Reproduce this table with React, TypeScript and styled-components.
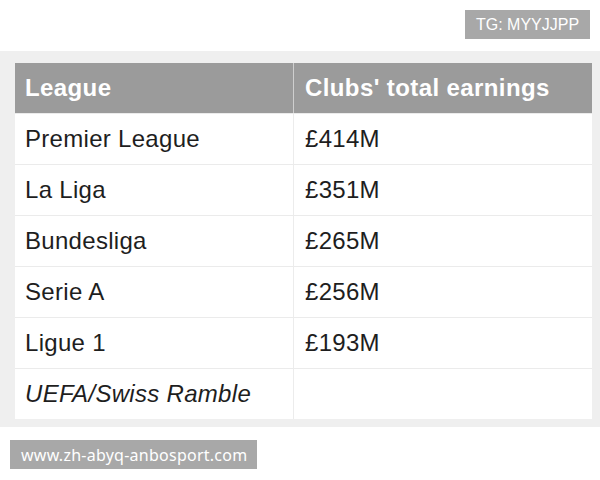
import styled, { createGlobalStyle } from "styled-components";

const GlobalStyle = createGlobalStyle`
  html, body {
    margin: 0;
    padding: 0;
    background: #ffffff;
  }
  body {
    font-family: "Liberation Sans", Arial, sans-serif;
  }
`

const rows = [
    {league: 'Premier League', earnings: '£414M'},
    {league: 'La Liga', earnings: '£351M'},
    {league: 'Bundesliga', earnings: '£265M'},
    {league: 'Serie A', earnings: '£256M'},
    {league: 'Ligue 1', earnings: '£193M'},
]

const App = () => {
    return (
        <Page>
            <GlobalStyle/>
            <TopBar>
                <Tag>TG: MYYJJPP</Tag>
            </TopBar>
            <Band>
                <Table>
                    <Row>
                        <HeadCell>League</HeadCell>
                        <HeadCell>Clubs' total earnings</HeadCell>
                    </Row>
                    {rows.map(r => (
                        <Row key={r.league}>
                            <Cell>{r.league}</Cell>
                            <Cell>{r.earnings}</Cell>
                        </Row>
                    ))}
                    <Row>
                        <Cell $italic>UEFA/Swiss Ramble</Cell>
                        <Cell/>
                    </Row>
                </Table>
            </Band>
            <Footer>
                <Url>www.zh-abyq-anbosport.com</Url>
            </Footer>
        </Page>
    );
};

const Page = styled.div`
  width: 600px;
  height: 480px;
  display: flex;
  flex-direction: column;
  background: #ffffff;`

const TopBar = styled.div`
  height: 51px;
  display: flex;
  justify-content: flex-end;
  align-items: flex-start;
  padding: 10px 10px 0 0;
  box-sizing: border-box;`

const Tag = styled.div`
  width: 125px;
  height: 29px;
  background: #a8a8a8;
  color: #ffffff;
  font-size: 16px;
  display: flex;
  align-items: center;
  justify-content: center;`

const Band = styled.div`
  height: 376px;
  background: #efefef;
  padding: 12px 8px 8px 15px;
  box-sizing: border-box;`

const Table = styled.div`
  display: grid;
  grid-template-columns: 278px 299px;
  background: #ebebeb;
  row-gap: 1px;`

const Row = styled.div`
  display: contents;`

const HeadCell = styled.div`
  height: 50px;
  background: #9b9b9b;
  color: #ffffff;
  font-weight: bold;
  font-size: 24px;
  letter-spacing: 0.4px;
  display: flex;
  align-items: center;
  padding-left: 10px;
  & + & {
    border-left: 1px solid #cfcfcf;
    padding-left: 11px;
  }`

const Cell = styled.div<{$italic?: boolean}>`
  height: 50px;
  background: #ffffff;
  color: #1e1e1e;
  font-size: 24px;
  letter-spacing: 0.3px;
  font-style: ${p => p.$italic ? 'italic' : 'normal'};
  display: flex;
  align-items: center;
  padding-left: 10px;
  & + & {
    border-left: 1px solid #ececec;
    padding-left: 11px;
  }`

const Footer = styled.div`
  padding: 13px 0 0 10px;`

const Url = styled.div`
  display: inline-flex;
  align-items: center;
  height: 29px;
  padding: 0 10px 0 11px;
  background: #a8a8a8;
  color: #ffffff;
  font-family: "Noto Sans", sans-serif;
  font-size: 16px;
  letter-spacing: 0.25px;`

export default App;
